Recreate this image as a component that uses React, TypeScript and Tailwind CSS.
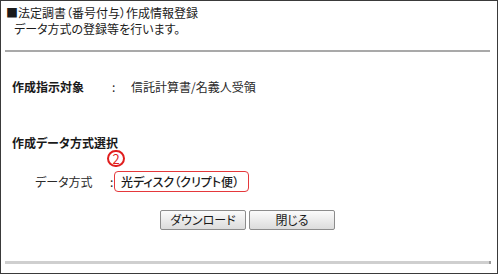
import React from "react";

export default function App() {
  return (
    <div
      className="w-[500px] h-[276px] bg-white"
      style={{ fontFamily: '"Noto Sans CJK JP", "Noto Sans", sans-serif' }}
    >
      <div className="relative w-[498px] h-[274px] border border-[#3a3a3a] bg-white text-[12px] text-[#1a1a1a] [font-feature-settings:'palt']">
        {/* Header */}
        <div className="pl-[5px] pt-[4px] leading-[16px]">
          <div>■法定調書（番号付与）作成情報登録</div>
          <div className="pl-[8px]">データ方式の登録等を行います。</div>
        </div>
        <div className="ml-[4px] mt-[13px] w-[485px] h-[2px] bg-[#a9a9a9]" />

        {/* Target row */}
        <div className="mt-[27px] flex items-center leading-[16px]">
          <div className="pl-[11px] w-[111px] font-bold">作成指示対象</div>
          <div className="w-[19px]">:</div>
          <div className="text-[#2a2a2a]">信託計算書/名義人受領</div>
        </div>

        {/* Section heading */}
        <div className="mt-[40px] pl-[11px] leading-[16px] font-bold">作成データ方式選択</div>

        {/* Data format row */}
        <div className="mt-[20px] flex items-center">
          <div className="pl-[34px] w-[109px] leading-[16px] text-[#2a2a2a]">データ方式</div>
          <div className="w-[4px] leading-[16px]">:</div>
          <div className="w-[135px] h-[21px] border-[1.5px] border-[#e5383b] rounded-[4px] flex items-center pl-[6px] leading-[16px] font-medium">
            光ディスク（クリプト便）
          </div>
        </div>

        {/* Buttons */}
        <div className="mt-[18px] flex pl-[159px] gap-[3px]">
          <button className="w-[86px] h-[20px] border border-[#8c8c8c] rounded-[2px] bg-gradient-to-b from-[#fbfbfb] to-[#dcdcdc] text-[12px] leading-[16px] text-[#1a1a1a] flex items-center justify-center">
            ダウンロード
          </button>
          <button className="w-[86px] h-[20px] border border-[#8c8c8c] rounded-[2px] bg-gradient-to-b from-[#fbfbfb] to-[#dcdcdc] text-[12px] leading-[16px] text-[#1a1a1a] flex items-center justify-center">
            閉じる
          </button>
        </div>

        <div className="ml-[4px] mt-[31px] w-[486px] h-[3px] bg-[#cfcfcf] flex justify-end">
          <div className="w-[2px] h-[3px] bg-[#9a9a9a]" />
        </div>

        {/* Annotation marker */}
        <div className="absolute left-[106px] top-[149px] w-[18px] h-[17px] rounded-full border-[2px] border-[#e01e1e] bg-white flex items-center justify-center text-[#e01e1e] text-[13px] leading-none">
          2
        </div>
      </div>
    </div>
  );
}
